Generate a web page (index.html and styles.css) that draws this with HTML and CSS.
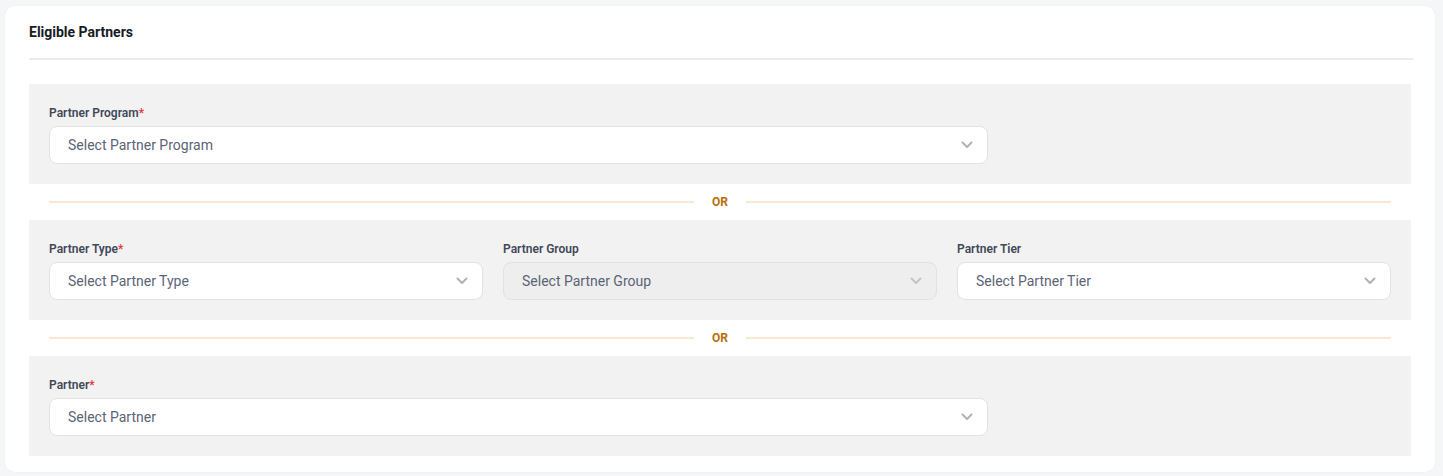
FILE: index.html
```html
<!DOCTYPE html>
<html lang="en">
<head>
  <meta charset="UTF-8" />
  <meta name="viewport" content="width=device-width, initial-scale=1.0"/>
  <title>Eligible Partners</title>
  <link rel="stylesheet" href="styles.css">
</head>
<body>
  <div class="card">
    <div class="card-header">
      <h2 class="card-title">Eligible Partners</h2>
    </div>

    <!-- Partner program -->
    <div class="criteria">
      <div class="field field-wide">
        <label>Partner Program<span class="req">*</span></label>
        <div class="select">
          <span>Select Partner Program</span>
          <svg class="chevron" viewBox="0 0 12 8"><polyline points="1.5,1.5 6,6 10.5,1.5"/></svg>
        </div>
      </div>
    </div>

    <div class="or-row"><span class="or-line"></span><span class="or-text">OR</span><span class="or-line"></span></div>

    <!-- Type / group / tier -->
    <div class="criteria criteria-grid">
      <div class="field">
        <label>Partner Type<span class="req">*</span></label>
        <div class="select">
          <span>Select Partner Type</span>
          <svg class="chevron" viewBox="0 0 12 8"><polyline points="1.5,1.5 6,6 10.5,1.5"/></svg>
        </div>
      </div>
      <div class="field">
        <label>Partner Group</label>
        <div class="select disabled">
          <span>Select Partner Group</span>
          <svg class="chevron" viewBox="0 0 12 8"><polyline points="1.5,1.5 6,6 10.5,1.5"/></svg>
        </div>
      </div>
      <div class="field">
        <label>Partner Tier</label>
        <div class="select">
          <span>Select Partner Tier</span>
          <svg class="chevron" viewBox="0 0 12 8"><polyline points="1.5,1.5 6,6 10.5,1.5"/></svg>
        </div>
      </div>
    </div>

    <div class="or-row"><span class="or-line"></span><span class="or-text">OR</span><span class="or-line"></span></div>

    <!-- Single partner -->
    <div class="criteria">
      <div class="field field-wide">
        <label>Partner<span class="req">*</span></label>
        <div class="select">
          <span>Select Partner</span>
          <svg class="chevron" viewBox="0 0 12 8"><polyline points="1.5,1.5 6,6 10.5,1.5"/></svg>
        </div>
      </div>
    </div>
  </div>
</body>
</html>
```

FILE: styles.css
```css
/* Reset */
* {
  margin: 0;
  padding: 0;
  box-sizing: border-box;
}
body {
  font-family: Roboto, "Liberation Sans", sans-serif;
  background: #f5f6f8;
  padding: 6px 8px 4px 5px;
}

/* Card */
.card {
  background: #fff;
  border-radius: 10px;
  box-shadow: 0 0 2px rgba(0,0,0,0.06);
  padding: 0 22px 16px 24px;
}
.card-header {
  height: 54px;
  display: flex;
  align-items: center;
  border-bottom: 2px solid #ebebeb;
  margin-bottom: 24px;
}
.card-title {
  font-size: 14px;
  font-weight: 700;
  color: #161b26;
}

/* Grey criteria blocks */
.criteria {
  background: #f2f2f2;
  padding: 20px;
  margin-right: 2px;
}
.criteria-grid {
  display: grid;
  grid-template-columns: repeat(3, 1fr);
  gap: 20px;
}
.field label {
  display: block;
  font-size: 12px;
  font-weight: 600;
  color: #414858;
  line-height: 18px;
  margin-bottom: 4px;
}
.field-wide {
  width: 70%;
}
.req {
  color: #e53935;
}

/* Select boxes */
.select {
  height: 38px;
  background: #fff;
  border: 1px solid #e2e2e2;
  border-radius: 8px;
  display: flex;
  align-items: center;
  justify-content: space-between;
  padding: 0 14px 0 18px;
  font-size: 14px;
  color: #5b6476;
}
.select.disabled {
  background: #eeeeee;
}
.chevron {
  width: 12px;
  height: 8px;
  fill: none;
  stroke: #b3b3b3;
  stroke-width: 2;
  stroke-linecap: round;
  stroke-linejoin: round;
}
.select.disabled .chevron {
  stroke: #c4c4c4;
}

/* OR separator */
.or-row {
  height: 36px;
  display: flex;
  align-items: center;
  padding: 0 22px 0 20px;
  gap: 16px;
}
.or-line {
  flex: 1;
  height: 2px;
  background: #fde6cf;
}
.or-text {
  font-size: 12px;
  font-weight: 700;
  color: #b86f0a;
  width: 20px;
  text-align: center;
}
```
